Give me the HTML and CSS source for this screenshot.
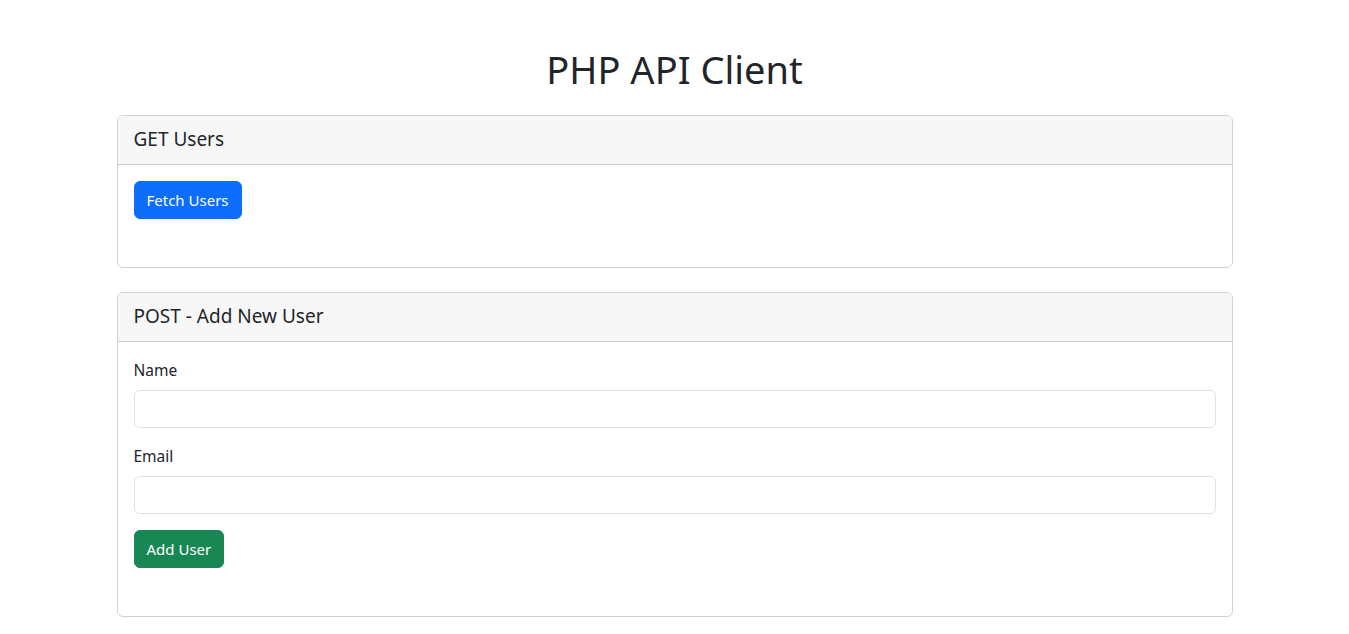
FILE: index.html
```html
<!DOCTYPE html>
<html lang="en">
<head>
<meta charset="utf-8">
<title>PHP API Client</title>
<link rel="stylesheet" href="styles.css">
</head>
<body>
<div class="container">
  <h1 class="title">PHP API Client</h1>

  <div class="card">
    <div class="card-header">GET Users</div>
    <div class="card-body">
      <button class="btn btn-primary" type="button">Fetch Users</button>
      <div class="result"></div>
    </div>
  </div>

  <div class="card">
    <div class="card-header">POST - Add New User</div>
    <div class="card-body">
      <form class="form">
        <div class="field">
          <label class="form-label" for="name">Name</label>
          <input class="form-control" id="name" type="text">
        </div>
        <div class="field">
          <label class="form-label" for="email">Email</label>
          <input class="form-control" id="email" type="email">
        </div>
        <button class="btn btn-success" type="button">Add User</button>
      </form>
      <div class="result"></div>
    </div>
  </div>
</div>
</body>
</html>
```

FILE: styles.css
```css
* { box-sizing: border-box; }
html, body { margin: 0; padding: 0; }
body {
  font-family: "Noto Sans", "Open Sans", sans-serif;
  font-size: 16px;
  line-height: 1.5;
  color: #212529;
  background: #fff;
}
.container {
  max-width: 1140px;
  margin: 0 auto;
  padding: 45px 12px 0;
}
.title {
  margin: 0 0 22px;
  text-align: center;
  font-size: 38px;
  font-weight: 400;
  line-height: 48px;
}
.card {
  border: 1px solid rgba(0,0,0,0.175);
  border-radius: 6px;
  margin-bottom: 24px;
  overflow: hidden;
}
.card-header {
  background: #f7f7f7;
  border-bottom: 1px solid rgba(0,0,0,0.175);
  padding: 9px 16px 11px;
  font-size: 19px;
  line-height: 28px;
}
.card-body {
  padding: 16px;
}
.result {
  height: 16px;
  margin-top: 16px;
}
.field { margin-bottom: 16px; }
.form-label {
  display: block;
  margin-bottom: 8px;
  font-size: 15.5px;
  line-height: 24px;
}
.form-control {
  display: block;
  width: 100%;
  height: 38px;
  padding: 6px 12px;
  font: inherit;
  border: 1px solid #dee2e6;
  border-radius: 6px;
  background: #fff;
  color: #212529;
}
.btn {
  display: inline-block;
  height: 38px;
  padding: 6px 12px;
  font: inherit;
  font-size: 15px;
  line-height: 24px;
  color: #fff;
  border: 1px solid transparent;
  border-radius: 6px;
  cursor: pointer;
}
.btn-primary { background: #0d6efd; border-color: #0d6efd; }
.btn-success { background: #198754; border-color: #198754; }
```
